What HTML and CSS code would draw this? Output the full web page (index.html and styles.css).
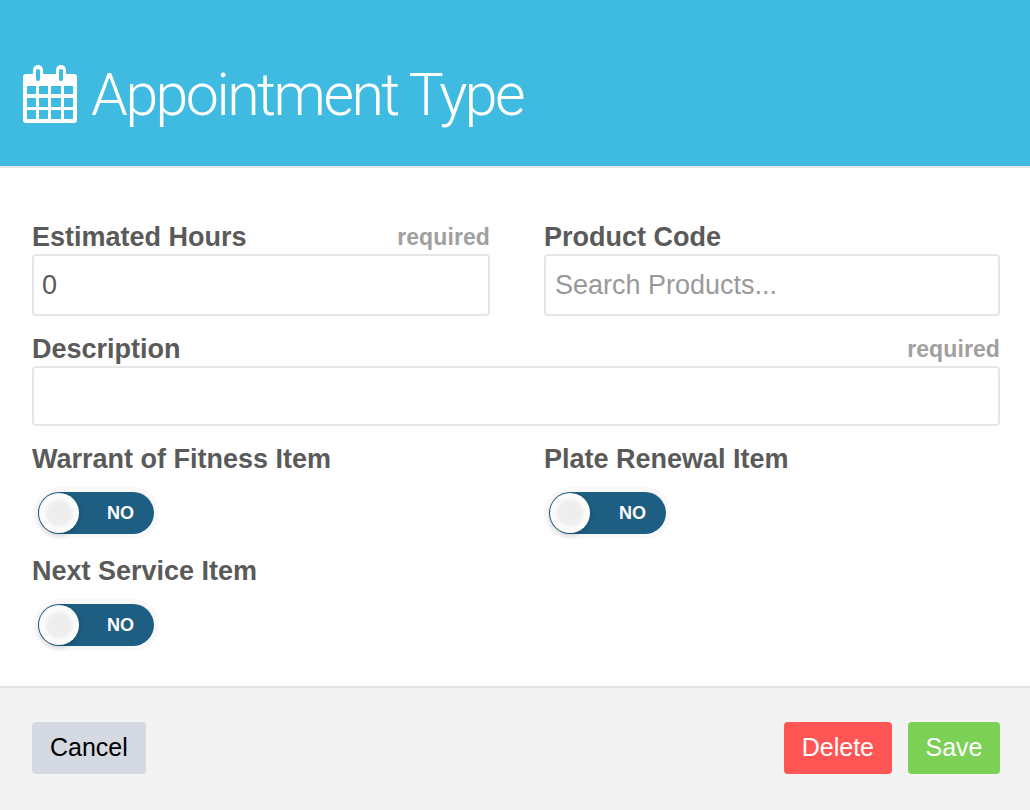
FILE: index.html
```html
<!DOCTYPE html>
<html lang="en">
  <head>
    <meta charset="UTF-8" />
    <title>Appointment Type</title>
    <link rel="stylesheet" href="styles.css">
  </head>
  <body>
    <header class="modal-header">
      <svg class="header-icon" viewBox="0 0 54 58" width="54" height="58">
        <path fill="#fff" fill-rule="evenodd" d="M3 9h48a3 3 0 0 1 3 3v43a3 3 0 0 1-3 3H3a3 3 0 0 1-3-3V12a3 3 0 0 1 3-3zM4 21v8h9v-8zm12 0v8h9v-8zm12 0v8h10v-8zm13 0v8h9v-8zM4 33v9h9v-9zm12 0v9h9v-9zm12 0v9h10v-9zm13 0v9h9v-9zM4 45v9h9v-9zm12 0v9h9v-9zm12 0v9h10v-9zm13 0v9h9v-9z"/>
        <rect fill="#fff" x="10" y="0" width="10" height="18" rx="5"/>
        <rect fill="#fff" x="33" y="0" width="10" height="18" rx="5"/>
        <rect fill="#3fbbe2" x="13" y="4" width="4" height="12" rx="2"/>
        <rect fill="#3fbbe2" x="36" y="4" width="4" height="12" rx="2"/>
      </svg>
      <h1>Appointment Type</h1>
    </header>

    <div class="modal-body">
      <div class="form-row two-col">
        <div class="form-group">
          <div class="label-row">
            <label>Estimated Hours</label>
            <span class="required">required</span>
          </div>
          <input type="text" class="number" value="0" />
        </div>
        <div class="form-group">
          <div class="label-row">
            <label>Product Code</label>
          </div>
          <input type="text" placeholder="Search Products..." />
        </div>
      </div>

      <div class="form-group description">
        <div class="label-row">
          <label>Description</label>
          <span class="required">required</span>
        </div>
        <input type="text" class="short" />
      </div>

      <div class="form-row two-col toggles">
        <div class="form-group">
          <div class="label-row"><label>Warrant of Fitness Item</label></div>
          <div class="toggle"><span class="knob"></span><span class="toggle-text">NO</span></div>
        </div>
        <div class="form-group">
          <div class="label-row"><label>Plate Renewal Item</label></div>
          <div class="toggle"><span class="knob"></span><span class="toggle-text">NO</span></div>
        </div>
      </div>

      <div class="form-group toggles">
        <div class="label-row"><label>Next Service Item</label></div>
        <div class="toggle"><span class="knob"></span><span class="toggle-text">NO</span></div>
      </div>
    </div>

    <footer class="modal-footer">
      <button class="btn btn-cancel">Cancel</button>
      <div class="footer-right">
        <button class="btn btn-delete">Delete</button>
        <button class="btn btn-save">Save</button>
      </div>
    </footer>
  </body>
</html>
```

FILE: styles.css
```css
* {
  margin: 0;
  padding: 0;
  box-sizing: border-box;
}

body {
  font-family: "Liberation Sans", Arial, sans-serif;
  background: #fff;
  color: #5a5a5a;
  height: 810px;
  overflow: hidden;
}

.modal-header {
  height: 168px;
  background: #3fbbe2;
  border-bottom: 2px solid #e5e5e5;
  display: flex;
  align-items: center;
  padding: 24px 0 0 23px;
}

.header-icon {
  flex: none;
  margin-top: -3px;
}

.modal-header h1 {
  font-family: Roboto, sans-serif;
  font-size: 59px;
  font-weight: 300;
  letter-spacing: -2.5px;
  color: #fff;
  margin: -2px 0 0 14px;
}

.modal-body {
  height: 518px;
  padding: 54px 30px 0 32px;
}

.two-col {
  display: grid;
  grid-template-columns: 458px 456px;
  column-gap: 54px;
}

.form-group {
  margin-bottom: 18px;
}

.label-row {
  display: flex;
  justify-content: space-between;
  align-items: center;
  height: 32px;
  padding-bottom: 2px;
}

label {
  font-size: 27px;
  font-weight: bold;
  color: #5a5a5a;
}

.required {
  font-size: 23px;
  font-weight: bold;
  letter-spacing: 0.1px;
  color: #a0a0a0;
}

input[type="text"] {
  display: block;
  width: 100%;
  height: 62px;
  border: 2px solid #e6e6ea;
  border-radius: 4px;
  padding: 0 9px;
  font-family: inherit;
  font-size: 27px;
  color: #5a5a5a;
  background: #fff;
  outline: none;
}

input[type="text"]::placeholder {
  color: #999;
  opacity: 1;
}

input.number {
  padding-left: 8px;
}

input.short {
  height: 60px;
}

.description {
  width: 968px;
}

.toggles .form-group,
.form-group.toggles {
  margin-bottom: 22px;
}

.toggles .label-row {
  margin-bottom: 16px;
}

.toggle {
  position: relative;
  width: 116px;
  height: 42px;
  margin-left: 6px;
  border-radius: 21px;
  background: #1d5e82;
  box-shadow: 0 0 0 5px #f9f9f9;
  display: flex;
  align-items: center;
  justify-content: flex-end;
  padding-right: 20px;
}

.form-group + .form-group .toggle {
  width: 117px;
  margin-left: 5px;
}

.knob {
  position: absolute;
  left: 1px;
  top: 1px;
  width: 40px;
  height: 40px;
  border-radius: 50%;
  background: radial-gradient(circle, #ececec 0, #efefef 40%, #fbfbfb 55%, #fff 100%);
  box-shadow: 0 2px 5px rgba(0, 0, 0, 0.2);
}

.toggle-text {
  font-size: 18px;
  font-weight: bold;
  color: #fff;
}

.modal-footer {
  height: 124px;
  background: #f3f3f3;
  border-top: 2px solid #e5e5e5;
  display: flex;
  justify-content: space-between;
  align-items: flex-start;
  padding: 34px 30px 0 32px;
}

.footer-right {
  display: flex;
  gap: 16px;
}

.btn {
  height: 52px;
  border: none;
  border-radius: 4px;
  font-family: inherit;
  font-size: 25px;
  padding: 0 18px 2px;
  cursor: pointer;
}

.btn-cancel {
  background: #d5d9e2;
  color: #000;
}

.btn-delete {
  background: #ff5555;
  color: #fff;
}

.btn-save {
  width: 92px;
  padding: 0 0 2px;
  background: #7bd055;
  color: #fff;
}
```
